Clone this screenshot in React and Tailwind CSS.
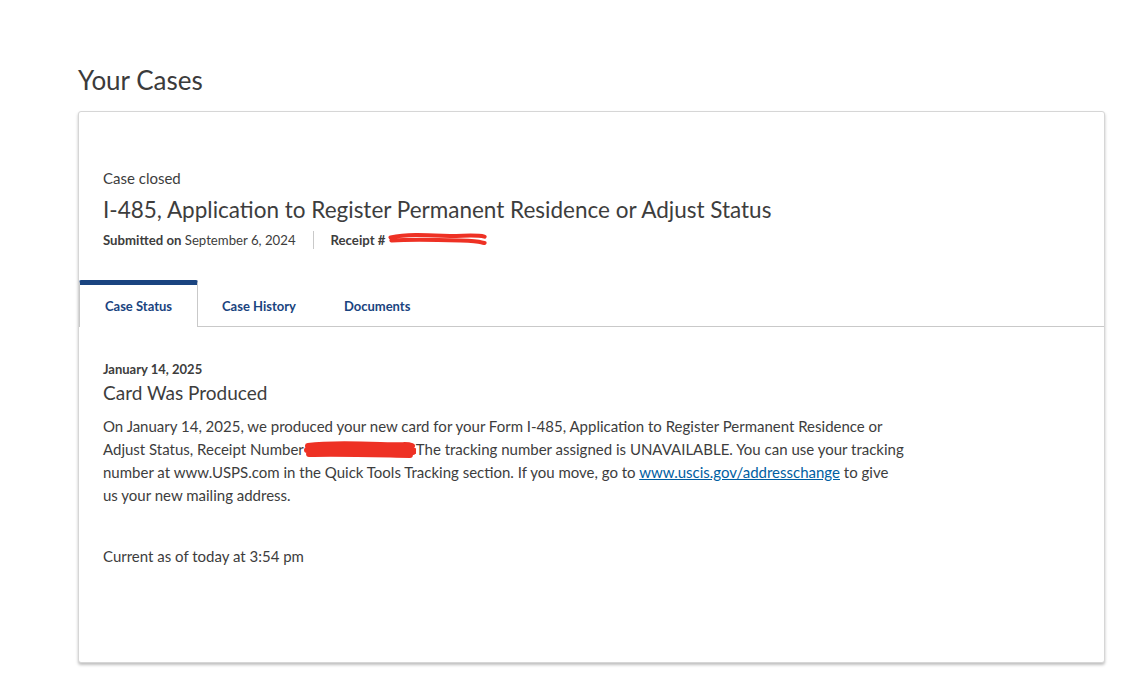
import { useState } from "react";

const tabs = ["Case Status", "Case History", "Documents"];

function Scribble({ className, thick }) {
  // red marker redaction
  return (
    <svg className={className} viewBox="0 0 110 20" preserveAspectRatio="none">
      <path
        d={
          thick
            ? "M4 6 C25 3, 50 4, 75 5 S100 4, 106 6 M3 10 C30 8, 60 9, 90 10 S104 11, 107 12 M5 14 C30 13, 60 14, 104 15"
            : "M3 8 C20 4, 40 5, 60 6 S95 4, 106 7 M4 12 C25 10, 55 11, 80 12 S100 14, 106 15"
        }
        stroke="#ee3124"
        strokeWidth={thick ? 6 : 5}
        strokeLinecap="round"
        fill="none"
      />
    </svg>
  );
}

export default function App() {
  const [active, setActive] = useState(0);

  return (
    <div className="min-h-screen bg-white font-['Lato',sans-serif] text-[#3d3d3d]">
      <div className="pl-[78px] pr-[34px] pt-[64px]">
        <h1 className="text-[26px] leading-[32px] text-[#3b3b3b]">Your Cases</h1>

        {/* Case card */}
        <div className="mt-[15px] h-[552px] rounded-[3px] border border-[#d6d6d6] shadow-[0_2px_3px_rgba(0,0,0,0.25)] bg-white">
          <div className="px-6 pt-[56px]">
            <p className="text-[15px] leading-5">Case closed</p>
            <h2 className="mt-[8px] text-[22.5px] leading-7">
              I-485, Application to Register Permanent Residence or Adjust Status
            </h2>
            <div className="mt-[6px] flex items-center text-[13.2px] leading-5">
              <span>
                <span className="font-bold">Submitted on</span> September 6, 2024
              </span>
              <span className="mx-[17px] h-[18px] w-px bg-[#c9c9c9]" />
              <span className="relative">
                <span className="font-bold">Receipt #</span>
                <Scribble className="absolute left-[57px] top-[1px] h-[16px] w-[100px]" />
              </span>
            </div>
          </div>

          {/* Tabs */}
          <div className="mt-[30px] flex border-b border-[#c9c9c9]">
            {tabs.map((t, i) =>
              i === active ? (
                <button
                  key={t}
                  onClick={() => setActive(i)}
                  className="-mb-px w-[119px] border-t-[5px] border-x border-t-[#1a4480] border-x-[#c9c9c9] rounded-t-[2px] bg-white pt-[11px] pb-[10px] text-[13px] font-bold text-[#1a4480]"
                >
                  {t}
                </button>
              ) : (
                <button
                  key={t}
                  onClick={() => setActive(i)}
                  className="px-6 pt-[17px] pb-[9px] text-[13px] font-bold text-[#1a4480]"
                >
                  {t}
                </button>
              )
            )}
          </div>

          {/* Status */}
          <div className="px-6 pt-[32px]">
            <p className="text-[13px] font-bold leading-5">January 14, 2025</p>
            <h3 className="mt-[2px] text-[19px] leading-6">Card Was Produced</h3>
            <p className="mt-[10px] max-w-[803px] text-[15px] leading-[23px]">
              On January 14, 2025, we produced your new card for your Form I-485, Application to
              Register Permanent Residence or Adjust Status, Receipt Number
              <span className="relative inline-block h-[14px] w-[112px] align-middle">
                <Scribble thick className="absolute left-0 top-[-4px] h-[20px] w-[112px]" />
              </span>
              The tracking number assigned is UNAVAILABLE. You can use your tracking number at
              www.USPS.com in the Quick Tools Tracking section. If you move, go to{" "}
              <a href="#" className="text-[#005ea2] underline">
                www.uscis.gov/addresschange
              </a>{" "}
              to give us your new mailing address.
            </p>
            <p className="mt-[38px] text-[15px] leading-[23px]">Current as of today at 3:54 pm</p>
          </div>
        </div>
      </div>
    </div>
  );
}
